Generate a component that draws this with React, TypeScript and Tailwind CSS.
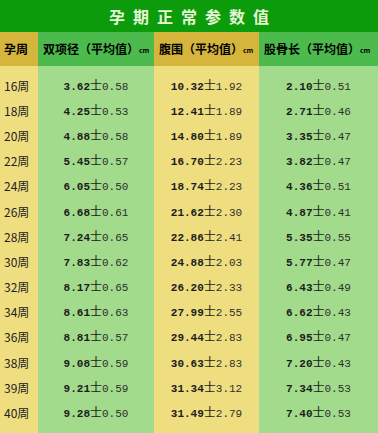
const rows: [string, string, string, string][] = [
  ['16周', '3.62|0.58', '10.32|1.92', '2.10|0.51'],
  ['18周', '4.25|0.53', '12.41|1.89', '2.71|0.46'],
  ['20周', '4.88|0.58', '14.80|1.89', '3.35|0.47'],
  ['22周', '5.45|0.57', '16.70|2.23', '3.82|0.47'],
  ['24周', '6.05|0.50', '18.74|2.23', '4.36|0.51'],
  ['26周', '6.68|0.61', '21.62|2.30', '4.87|0.41'],
  ['28周', '7.24|0.65', '22.86|2.41', '5.35|0.55'],
  ['30周', '7.83|0.62', '24.88|2.03', '5.77|0.47'],
  ['32周', '8.17|0.65', '26.20|2.33', '6.43|0.49'],
  ['34周', '8.61|0.63', '27.99|2.55', '6.62|0.43'],
  ['36周', '8.81|0.57', '29.44|2.83', '6.95|0.47'],
  ['38周', '9.08|0.59', '30.63|2.83', '7.20|0.43'],
  ['39周', '9.21|0.59', '31.34|3.12', '7.34|0.53'],
  ['40周', '9.28|0.50', '31.49|2.79', '7.40|0.53'],
];

const cjk = "font-['Noto_Sans_CJK_SC',sans-serif]";
const mono = "font-['Liberation_Mono','Noto_Sans_CJK_SC',monospace]";

function Value({ v }: { v: string }) {
  const [mean, sd] = v.split('|');
  return (
    <span className={`${mono} text-[11px] leading-none text-[#1c1c1c] whitespace-nowrap`}>
      <b className="font-bold">{mean}</b>
      <span className={`${cjk} text-[12px]`}>士</span>
      <span className="text-[#2e2e2e]">{sd}</span>
    </span>
  );
}

function Head({ label }: { label: string }) {
  return (
    <div className={`flex items-center pl-[5px] ${cjk} text-[12px] font-bold text-black whitespace-nowrap`}>
      {label}
      <span className="text-[7px] mt-[2px] tracking-[-0.3px]">cm</span>
    </div>
  );
}

export default function App() {
  const cols = [1, 2, 3];
  return (
    <div className="w-[378px] h-[433px] overflow-hidden flex flex-col">
      <div className="h-[32px] bg-[#0b9b0b] flex items-center justify-center">
        <h1 className={`${cjk} text-[16px] font-bold text-[#e6f7d6] tracking-[8px] pl-[8px]`}>
          孕期正常参数值
        </h1>
      </div>
      <div className="h-[34px] grid grid-cols-[38px_116px_105px_119px]">
        <div className={`bg-[#d5b53b] flex items-center pl-[4px] ${cjk} text-[12px] font-bold text-black`}>孕周</div>
        <div className="bg-[#4dba4d] flex">
          <Head label="双项径（平均值）" />
        </div>
        <div className="bg-[#d5b53b] flex">
          <Head label="腹围（平均值）" />
        </div>
        <div className="bg-[#4dba4d] flex">
          <Head label="股骨长（平均值）" />
        </div>
      </div>
      <div className="flex-1 grid grid-cols-[38px_116px_105px_119px]">
        <div className="bg-[#efde80] pt-[7px] flex flex-col">
          {rows.map((r) => (
            <div key={r[0]} className={`h-[25.2px] flex items-center pl-[4px] ${cjk} text-[12px] text-[#222]`}>
              {r[0]}
            </div>
          ))}
        </div>
        {cols.map((c) => (
          <div key={c} className={`${c % 2 ? 'bg-[#a2db8b]' : 'bg-[#efde80]'} pt-[7px] flex flex-col`}>
            {rows.map((r) => (
              <div key={r[0]} className="h-[25.2px] flex items-center justify-center">
                <Value v={r[c]} />
              </div>
            ))}
          </div>
        ))}
      </div>
    </div>
  );
}
